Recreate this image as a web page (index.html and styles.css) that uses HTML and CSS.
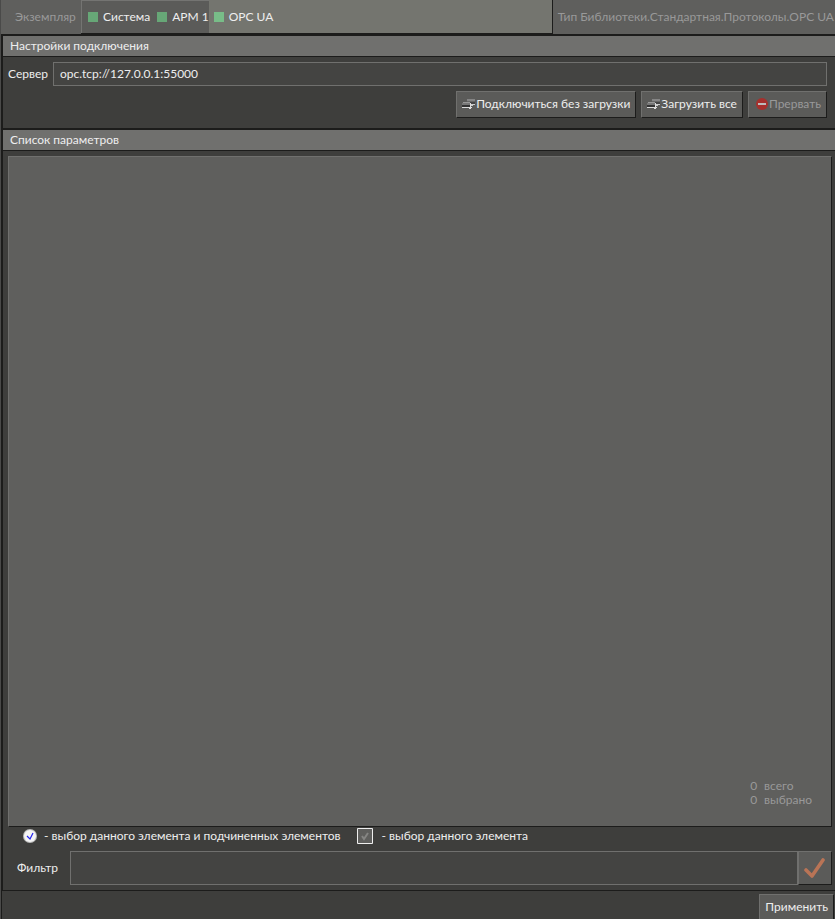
FILE: index.html
```html
<!DOCTYPE html>
<html lang="ru">
<head>
<meta charset="utf-8">
<title>OPC UA</title>
<link rel="stylesheet" href="styles.css">
</head>
<body>
<svg class="defs" aria-hidden="true">
  <symbol id="net" viewBox="0 0 14 14">
    <path d="M5 2h8v2H5z" fill="#858585"/>
    <path d="M5 4h8v1H5z" fill="#666"/>
    <path d="M6 5h7v2H6z" fill="#444"/>
    <path d="M9 7h4v1h-2v1H9z" fill="#ccc"/>
    <path d="M1 5h7v1H1z" fill="#999"/>
    <path d="M0 6h8v2H0z" fill="#777"/>
    <path d="M0 8h8v2H0z" fill="#333"/>
    <path d="M0 10h7v1H0zM8 6h1v4H8zM7 10h3v1H9v1H7z" fill="#ddd"/>
  </symbol>
</svg>
<div class="app">
  <header class="top">
    <span class="instance">Экземпляр</span>
    <nav class="path">
      <a class="crumb" href="#"><i class="mark"></i>Система</a>
      <a class="crumb" href="#"><i class="mark"></i>АРМ 1</a>
      <a class="crumb current" href="#"><i class="mark"></i>OPC UA</a>
    </nav>
    <span class="type">Тип Библиотеки.Стандартная.Протоколы.OPC UA</span>
  </header>
  <main class="body">
    <section class="connection">
      <h2 class="title">Настройки подключения</h2>
      <div class="server">
        <label for="server">Сервер</label>
        <input id="server" class="field" type="text" value="opc.tcp://127.0.0.1:55000">
      </div>
      <div class="actions">
        <button class="btn" type="button"><svg class="icon"><use href="#net"/></svg>Подключиться без загрузки</button>
        <button class="btn" type="button"><svg class="icon"><use href="#net"/></svg>Загрузить все</button>
        <button class="btn" type="button" disabled><svg class="icon" viewBox="0 0 14 14"><circle cx="7" cy="7" r="6" fill="#a5302d"/><path d="M3 6h8v2H3z" fill="#bbb"/></svg>Прервать</button>
      </div>
    </section>
    <section class="params">
      <h2 class="title">Список параметров</h2>
      <div class="list">
        <dl class="counts">
          <dt>0</dt><dd>всего</dd>
          <dt>0</dt><dd>выбрано</dd>
        </dl>
      </div>
      <div class="legend">
        <svg class="round" viewBox="0 0 14 14"><circle cx="7" cy="7" r="7" fill="#bbb"/><circle cx="7" cy="7" r="6" fill="#f5f5f5"/><path d="M4 7l3 3 3-6" fill="none" stroke="#2222ee" stroke-width="1.2"/></svg>
        <span>- выбор данного элемента и подчиненных элементов</span>
        <svg class="square" viewBox="0 0 16 16"><path d="M.5.5h15v15H.5z" fill="#5e5e5c" stroke="#eee"/><path d="M5 8l2 3 4-6" fill="none" stroke="#858583" stroke-width="2"/></svg>
        <span>- выбор данного элемента</span>
      </div>
      <div class="filter">
        <label for="filter">Фильтр</label>
        <input id="filter" class="field" type="text">
        <button class="btn accept" type="button" aria-label="Применить фильтр"><svg class="check" viewBox="0 0 22 22"><path d="M2 13l6 6L19 3" fill="none" stroke="#b97456" stroke-width="3.6" stroke-linecap="round" stroke-linejoin="round"/></svg></button>
      </div>
    </section>
  </main>
  <footer class="bottom"><button class="btn apply" type="button">Применить</button></footer>
</div>
</body>
</html>
```
FILE: styles.css
```css
* { box-sizing: border-box; }
body { margin: 0; background: #3e3e3c; color: #eee; font: 12px/16px Lato, sans-serif; }
input, button { font: inherit; color: inherit; }
.defs { position: absolute; width: 0; height: 0; }
.app { display: flex; flex-direction: column; min-height: 100vh; border-left: 1px solid #4a4a49; }
.top { display: flex; height: 34px; background: #5f5f5d; white-space: nowrap; }
.instance { width: 80px; padding: 9px 0 0 14px; color: #999; }
.path { display: flex; flex: 1; border: 1px solid #1c1c1b; border-width: 0 1px 1px 0; background: #5b5b59; box-shadow: inset 1px 1px #747472; }
.crumb { display: flex; align-items: center; padding-left: 7px; color: #eee; text-decoration: none; }
.current { flex: 1; padding-left: 5px; background: #74756f; }
.mark { width: 10px; height: 10px; margin-right: 5px; background: #67a777; }
.current .mark { background: #78bd88; }
.type { padding: 9px 1px 0 5px; color: #999; }
.body { display: flex; flex-direction: column; flex: 1; border: 2px solid #1c1c1b; border-width: 2px 0 1px 2px; }
.title { margin: 0; height: 21px; padding: 2px 7px; border-bottom: 1px solid #1c1c1b; background: #70706e; font-size: 12px; font-weight: 400; }
.connection { border-bottom: 2px solid #1c1c1b; }
.server { display: flex; align-items: center; padding: 5px 8px 5px 5px; }
.server label { width: 45px; }
.field { flex: 1; min-width: 0; height: 24px; padding: 0 6px 2px; border: 1px solid #70706e; background: #444442; outline: 0; }
.actions { display: flex; justify-content: flex-end; gap: 5px; padding: 0 8px 10px; }
.btn { display: flex; align-items: center; height: 27px; padding: 0 5px 2px; border: 1px solid #70706e; border-right-color: #1c1c1b; border-bottom-color: #1c1c1b; background: #5b5b59; white-space: nowrap; }
.btn:disabled { padding-left: 6px; color: #999; }
.icon { width: 14px; height: 14px; }
.params { display: flex; flex-direction: column; flex: 1; }
.list { display: flex; flex: 1; align-items: flex-end; justify-content: flex-end; margin: 5px 3px 0 5px; padding: 0 19px 19px; border: 1px solid #70706e; border-right-color: #1c1c1b; border-bottom-color: #1c1c1b; background: #5f5f5d; }
.counts { display: grid; grid-template-columns: auto auto; gap: 0 7px; margin: 0; color: #999; line-height: 14px; }
.counts dd { margin: 0; }
.legend { display: flex; align-items: center; height: 19px; padding: 0 0 1px 20px; }
.round { width: 14px; height: 14px; margin-right: 7px; }
.square { width: 16px; height: 16px; margin: 0 9px 0 16px; }
.filter { display: flex; align-items: center; padding: 5px 3px 5px 14px; }
.filter label { width: 53px; }
.filter .field { height: 34px; }
.accept { width: 34px; height: 34px; padding: 0; justify-content: center; }
.check { width: 22px; height: 22px; }
.bottom { display: flex; justify-content: flex-end; padding: 3px 1px 0 0; border-left: 1px solid #1c1c1b; }
.apply { height: 25px; padding: 0 5px; border-bottom: 0; }
```
